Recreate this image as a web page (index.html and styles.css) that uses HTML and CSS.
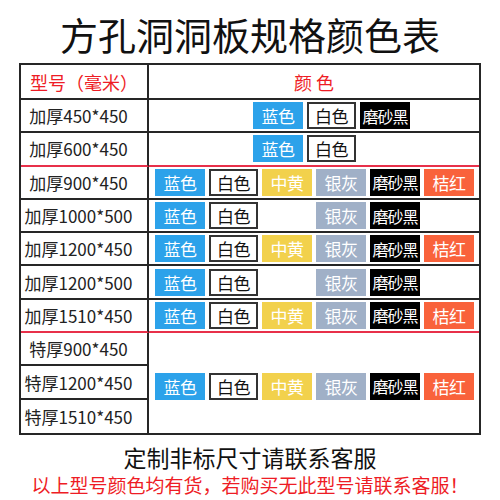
FILE: index.html
```html
<!DOCTYPE html>
<html lang="zh">
<head>
  <meta charset="UTF-8" />
  <meta name="viewport" content="width=device-width, initial-scale=1" />
  <title>方孔洞洞板规格颜色表</title>
  <link rel="stylesheet" href="styles.css">
</head>
<body>
  <div class="page-title">方孔洞洞板规格颜色表</div>
  <div class="spec-sheet">
    <div class="cell head">型号（毫米）</div>
    <div class="cell head color-head">颜 色</div>

    <div class="cell size">加厚450*450</div>
    <div class="cell colors short">
      <span class="chip blue">蓝色</span>
      <span class="chip white">白色</span>
      <span class="chip black">磨砂黑</span>
    </div>

    <div class="cell size sep">加厚600*450</div>
    <div class="cell colors short sep">
      <span class="chip blue">蓝色</span>
      <span class="chip white">白色</span>
    </div>

    <div class="cell size">加厚900*450</div>
    <div class="cell colors">
      <span class="chip blue">蓝色</span>
      <span class="chip white">白色</span>
      <span class="chip yellow">中黄</span>
      <span class="chip silver">银灰</span>
      <span class="chip black">磨砂黑</span>
      <span class="chip orange">桔红</span>
    </div>

    <div class="cell size">加厚1000*500</div>
    <div class="cell colors">
      <span class="chip blue">蓝色</span>
      <span class="chip white">白色</span>
      <span class="chip empty"></span>
      <span class="chip silver">银灰</span>
      <span class="chip black">磨砂黑</span>
    </div>

    <div class="cell size">加厚1200*450</div>
    <div class="cell colors">
      <span class="chip blue">蓝色</span>
      <span class="chip white">白色</span>
      <span class="chip yellow">中黄</span>
      <span class="chip silver">银灰</span>
      <span class="chip black">磨砂黑</span>
      <span class="chip orange">桔红</span>
    </div>

    <div class="cell size">加厚1200*500</div>
    <div class="cell colors">
      <span class="chip blue">蓝色</span>
      <span class="chip white">白色</span>
      <span class="chip empty"></span>
      <span class="chip silver">银灰</span>
      <span class="chip black">磨砂黑</span>
    </div>

    <div class="cell size sep">加厚1510*450</div>
    <div class="cell colors sep">
      <span class="chip blue">蓝色</span>
      <span class="chip white">白色</span>
      <span class="chip yellow">中黄</span>
      <span class="chip silver">银灰</span>
      <span class="chip black">磨砂黑</span>
      <span class="chip orange">桔红</span>
    </div>

    <div class="cell size">特厚900*450</div>
    <div class="cell colors span3">
      <span class="chip blue">蓝色</span>
      <span class="chip white">白色</span>
      <span class="chip yellow">中黄</span>
      <span class="chip silver">银灰</span>
      <span class="chip black">磨砂黑</span>
      <span class="chip orange">桔红</span>
    </div>
    <div class="cell size">特厚1200*450</div>
    <div class="cell size last">特厚1510*450</div>
  </div>
  <div class="note">定制非标尺寸请联系客服</div>
  <div class="note-red">以上型号颜色均有货，若购买无此型号请联系客服！</div>
</body>
</html>
```

FILE: styles.css
```css
body {
  margin: 0;
  background: #fff;
  font-family: "Noto Sans CJK SC", "Liberation Sans", sans-serif;
  color: #111;
}
.page-title {
  height: 63px;
  line-height: 68px;
  font-size: 38px;
  text-align: center;
  color: #111;
}
.spec-sheet {
  width: 462px;
  margin-left: 19px;
  box-sizing: border-box;
  border: 2px solid #262626;
  display: grid;
  grid-template-columns: 128px 1fr;
  grid-template-rows: 35px repeat(10, 33.3px);
}
.cell {
  box-sizing: border-box;
  border-bottom: 2px solid #262626;
  display: flex;
  align-items: center;
}
.cell.size,
.cell.head:first-child {
  border-right: 2px solid #262626;
}
.head {
  justify-content: center;
  font-size: 18px;
  color: #ee1c25;
}
.size {
  justify-content: center;
  padding-right: 11px;
  font-size: 17px;
  color: #222;
}
.cell.sep {
  border-bottom-color: #e8304a;
}
.cell.last {
  border-bottom: none;
}
.colors {
  gap: 4px;
  padding-left: 6px;
}
.colors.short {
  padding-left: 104px;
}
.colors.span3 {
  grid-row: span 3;
  grid-column: 2;
  border-bottom: none;
  padding-top: 6px;
}
.chip {
  box-sizing: border-box;
  width: 50px;
  height: 27px;
  display: flex;
  align-items: center;
  justify-content: center;
  font-size: 17px;
  color: #fff;
  white-space: nowrap;
  letter-spacing: -0.5px;
}
.chip.blue { background: #2ca2ea; }
.chip.white { background: #fff; color: #111; border: 2px solid #333; width: 49px; }
.chip.yellow { background: #f2d14c; }
.chip.silver { background: #a0b0c7; }
.chip.black { background: #000; font-size: 16px; letter-spacing: -1px; }
.chip.orange { background: #f9623b; }
.chip.empty { background: none; }
.note {
  margin-top: 8px;
  text-align: center;
  font-size: 23px;
  line-height: 28px;
  color: #111;
}
.note-red {
  margin-top: 3px;
  text-align: center;
  font-size: 19px;
  line-height: 22px;
  color: #ee1c25;
}
```
